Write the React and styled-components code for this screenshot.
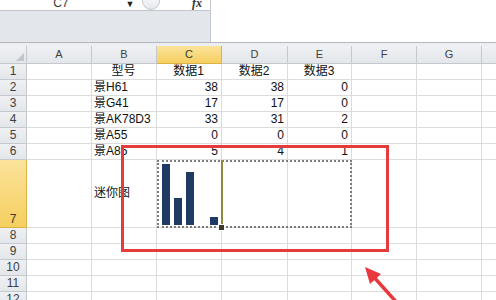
import React from 'react';
import styled, { createGlobalStyle } from 'styled-components';

const GlobalStyle = createGlobalStyle`
  html, body {
    margin: 0;
    padding: 0;
    background: #ffffff;
  }
  body {
    font-family: "Liberation Sans", "Noto Sans CJK SC", sans-serif;
  }
`;

const Sheet = styled.div`
  position: relative;
  width: 496px;
  height: 300px;
  overflow: hidden;
  background: #ffffff;
`;

const FormulaBar = styled.div`
  display: flex;
  height: 42px;
`;

const NamePanel = styled.div`
  width: 211px;
  display: flex;
  flex-direction: column;
  border-right: 1px solid #c4c8ce;
  box-sizing: border-box;
`;

const NameRow = styled.div`
  height: 11px;
  display: flex;
  align-items: flex-end;
  overflow: hidden;
  background: #ffffff;
  border-bottom: 1px solid #c3c7cd;
  box-sizing: border-box;
`;

const NameBox = styled.div`
  width: 122px;
  text-align: center;
  font-size: 12px;
  line-height: 13px;
  color: #3a3a3a;
`;

const Caret = styled.div`
  width: 16px;
  font-size: 9px;
  line-height: 11px;
  color: #222;
  text-align: center;
`;

const Splitter = styled.div`
  width: 18px;
  height: 18px;
  margin-left: 4px;
  border-radius: 50%;
  border: 1px solid #c5c9cf;
  background: linear-gradient(#ffffff, #e4e7eb);
  box-sizing: border-box;
`;

const Fx = styled.div`
  margin-left: auto;
  margin-right: 8px;
  font-family: "Liberation Serif", serif;
  font-style: italic;
  font-weight: bold;
  font-size: 12px;
  line-height: 14px;
  color: #333;
`;

const NameFiller = styled.div`
  flex: 1;
  background: #e3e6ea;
`;

const FormulaInput = styled.div`
  flex: 1;
  background: #ffffff;
`;

const Strip = styled.div`
  height: 4px;
  background: #eceef1;
  border-top: 1px solid #b4b8be;
  box-sizing: border-box;
`;

const Grid = styled.div`
  display: grid;
  grid-template-columns: 27px 65px 65px 65px 66px 64px 65px 65px 65px;
  grid-template-rows: 18px repeat(6, 16px) 68px repeat(5, 16px);
`;

const HeadCell = styled.div`
  display: flex;
  align-items: ${(p) => (p.$row ? 'flex-end' : 'center')};
  justify-content: center;
  grid-column: ${(p) => p.$col || 'auto'};
  grid-row: ${(p) => p.$line || 'auto'};
  background: ${(p) =>
    p.$active ? 'linear-gradient(#fbe39b, #f6cf5f)' : 'linear-gradient(#eff1f4, #e3e6ea)'};
  border-right: 1px solid ${(p) => (p.$active ? '#d9b445' : '#c5c9ce')};
  border-bottom: 1px solid ${(p) => (p.$active ? '#d9b445' : '#c5c9ce')};
  box-sizing: border-box;
  font-size: ${(p) => (p.$row ? '12px' : '11px')};
  line-height: 15px;
  color: ${(p) => (p.$active ? '#3a3a2a' : '#3f3f3f')};
`;

const Corner = styled(HeadCell)`
  align-items: flex-end;
  justify-content: flex-end;
  padding: 0 2px 2px 0;
`;

const Cell = styled.div`
  display: flex;
  align-items: center;
  justify-content: ${(p) =>
    p.$align === 'right' ? 'flex-end' : p.$align === 'center' ? 'center' : 'flex-start'};
  grid-column: ${(p) => p.$col || 'auto'};
  grid-row: ${(p) => p.$line || 'auto'};
  padding: 0 3px 0 2px;
  border-right: 1px solid #dcdcdc;
  border-bottom: 1px solid #dcdcdc;
  box-sizing: border-box;
  font-size: 12px;
  line-height: 15px;
  color: #111;
  white-space: nowrap;
`;

const SparkCell = styled.div`
  grid-column: 4;
  grid-row: 8;
  border-right: 1px solid #dcdcdc;
  border-bottom: 1px solid #dcdcdc;
  box-sizing: border-box;
`;

const SparkGroup = styled.div`
  grid-column: 4 / 7;
  grid-row: 8;
  border: 2px dotted #7c7c7c;
  box-sizing: border-box;
  pointer-events: none;
`;

const ActiveCell = styled.div`
  grid-column: 4;
  grid-row: 8;
  position: relative;
  border-right: 2px solid #8e8b40;
  margin-right: -1px;
  pointer-events: none;
`;

const Handle = styled.div`
  position: absolute;
  right: -4px;
  bottom: -3px;
  width: 5px;
  height: 5px;
  background: #3b3b2a;
  border: 1px solid #ffffff;
`;

const RedBox = styled.div`
  position: absolute;
  left: 121px;
  top: 145px;
  width: 268px;
  height: 107px;
  border: 3px solid #e53b3d;
  box-sizing: border-box;
  pointer-events: none;
`;

const Arrow = styled.svg`
  position: absolute;
  left: 355px;
  top: 258px;
`;

const columns = ['A', 'B', 'C', 'D', 'E', 'F', 'G', 'H'];

const rows = [
  ['', '型号', '数据1', '数据2', '数据3'],
  ['', '景H61', 38, 38, 0],
  ['', '景G41', 17, 17, 0],
  ['', '景AK78D3', 33, 31, 2],
  ['', '景A55', 0, 0, 0],
  ['', '景A85', 5, 4, 1],
];

const spark = [38, 17, 33, 0, 5];

const Sparkline = () => (
  <svg width="64" height="67" viewBox="0 0 64 67">
    {spark.map((v, i) => {
      const h = Math.round(v * 1.605);
      return h > 0 ? (
        <rect key={i} x={5 + i * 12} y={65 - h} width="8" height={h} fill="#1f3b63" />
      ) : null;
    })}
  </svg>
);

const align = (v, r) => {
  if (r === 0) return 'center';
  return typeof v === 'number' ? 'right' : 'left';
};

const App = () => {
  return (
    <Sheet>
      <GlobalStyle />
      <FormulaBar>
        <NamePanel>
          <NameRow>
            <NameBox>C7</NameBox>
            <Caret>▼</Caret>
            <Splitter />
            <Fx>fx</Fx>
          </NameRow>
          <NameFiller />
        </NamePanel>
        <FormulaInput />
      </FormulaBar>
      <Strip />
      <Grid>
        <Corner>
          <svg width="8" height="8" viewBox="0 0 8 8">
            <polygon points="8,0 8,8 0,8" fill="#c2c6cc" />
          </svg>
        </Corner>
        {columns.map((c) => (
          <HeadCell key={c} $active={c === 'C'}>{c}</HeadCell>
        ))}

        {rows.map((row, r) => (
          <React.Fragment key={r}>
            <HeadCell $row>{r + 1}</HeadCell>
            {row.map((v, i) => (
              <Cell key={i} $align={align(v, r)}>{v}</Cell>
            ))}
            <Cell />
            <Cell />
            <Cell />
          </React.Fragment>
        ))}

        {/* row 7: sparkline row, every cell placed on line 8 */}
        <HeadCell $row $active $col={1} $line={8}>7</HeadCell>
        <Cell $col={2} $line={8} />
        <Cell $col={3} $line={8}>迷你图</Cell>
        <SparkCell>
          <Sparkline />
        </SparkCell>
        {[5, 6, 7, 8, 9].map((c) => (
          <Cell key={c} $col={c} $line={8} />
        ))}
        <SparkGroup />
        <ActiveCell>
          <Handle />
        </ActiveCell>

        {[8, 9, 10, 11, 12].map((n) => (
          <React.Fragment key={n}>
            <HeadCell $row $col={1} $line={n + 1}>{n}</HeadCell>
            {columns.map((c, i) => (
              <Cell key={c} $col={i + 2} $line={n + 1} />
            ))}
          </React.Fragment>
        ))}
      </Grid>
      <RedBox />
      <Arrow width="45" height="45" viewBox="0 0 45 45">
        <line x1="17" y1="17" x2="44" y2="47" stroke="#e8383d" strokeWidth="3.5" />
        <polygon points="10,9 26,16 15,26" fill="#e8383d" />
      </Arrow>
    </Sheet>
  );
};

export default App;
